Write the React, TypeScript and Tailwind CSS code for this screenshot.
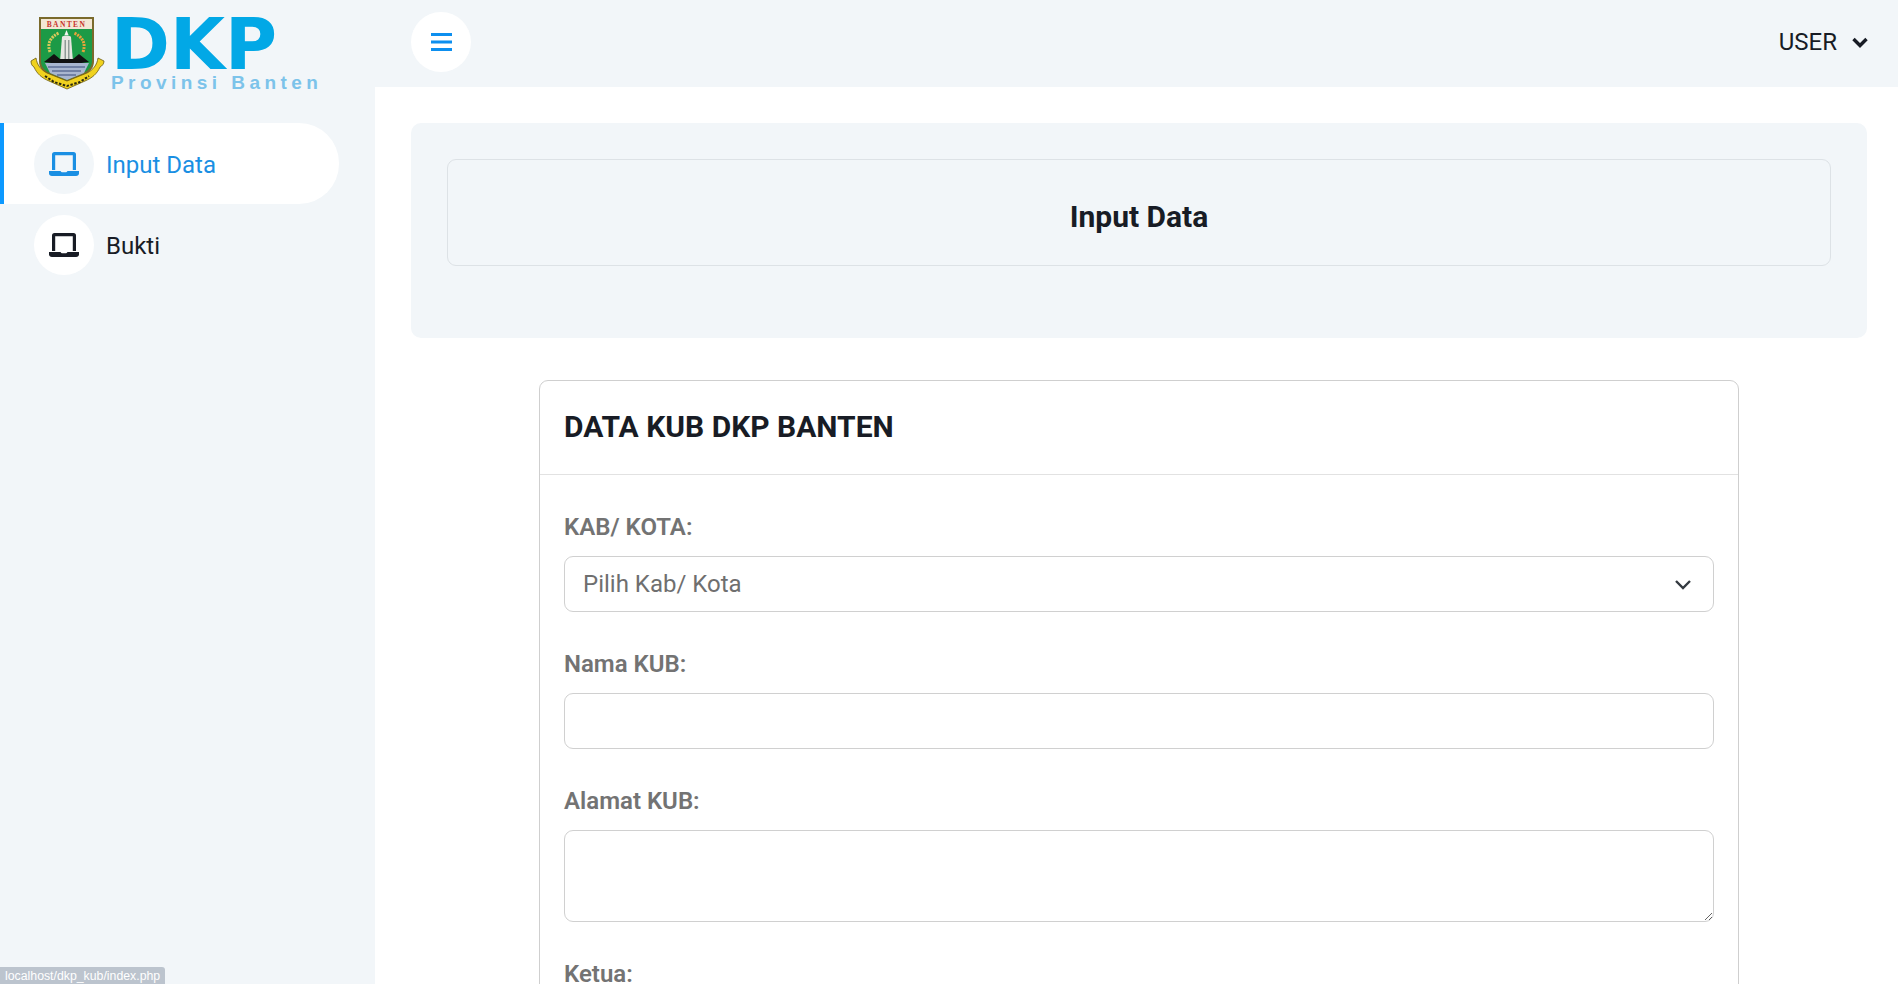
const LaptopIcon = ({ className }: { className: string }) => (
  <svg viewBox="0 0 30 24" className={className} fill="currentColor">
    <path d="M3 2.500A2.500 2.500 0 0 1 5.500 0h19A2.500 2.500 0 0 1 27 2.500V18h-3.200V3.200H6.200V18H3z" />
    <path d="M0 19h11.500c.4.9 1.200 1.300 2 1.300h3c.8 0 1.600-.4 2-1.300H30v1.800A3 3 0 0 1 27 24H3a3 3 0 0 1-3-3.200z" />
  </svg>
);

const MenuIcon = ({ className }: { className: string }) => (
  <svg viewBox="0 0 21 18" className={className} fill="currentColor">
    <rect width="21" height="3" />
    <rect y="7.500" width="21" height="3" />
    <rect y="15" width="21" height="3" />
  </svg>
);

const ChevronBold = ({ className }: { className: string }) => (
  <svg viewBox="0 0 16 11" className={className} fill="none" stroke="currentColor" strokeWidth="3.400">
    <path d="M1.500 2l6.500 6.500L14.500 2" />
  </svg>
);

// emblem of the province, simplified
const Emblem = () => (
  <svg viewBox="0 0 80 76" className="h-[76px] w-[80px] shrink-0">
    <path d="M11 1h55v44c0 7-4 11-10 14l-17 7-18-7c-6-3-10-7-10-14z" fill="#7a6a2c" />
    <path d="M13 3h51v42c0 6-4 10-9 12l-16 7-17-7c-5-2-9-6-9-12z" fill="#1c9a46" />
    <rect x="13" y="3" width="51" height="10" fill="#f3e7d5" />
    <text x="38.500" y="11" textAnchor="middle" fontSize="7.500" fontWeight="700" letterSpacing="1.400" fill="#c8352c" fontFamily="Liberation Serif, serif">BANTEN</text>
    <path d="M22 36c-3-8 0-15 9-19" fill="none" stroke="#d9c95a" strokeWidth="3" strokeDasharray="2 1" />
    <path d="M55 36c3-8 0-15-9-19" fill="none" stroke="#e8a33a" strokeWidth="3" strokeDasharray="2 1" />
    <path d="M38.500 14l2 5h-4z" fill="#f4f4f0" />
    <path d="M34 21c1-2 8-2 9 0l2 25H32z" fill="#e6e6e0" />
    <path d="M36.500 24h1.500v21h-1.500zM40 24h1.500v21H40z" fill="#8f9a96" />
    <path d="M16 46l10-8 6 5h13l6-5 10 8-23 3z" fill="#111" />
    <path d="M17 47h44l-5 10-17 7-17-7z" fill="#a9b6cf" />
    <path d="M20 51h37M24 55h29M29 59h19" stroke="#5e6f96" strokeWidth="1.400" />
    <path d="M3 45l5-3c1 7 5 12 11 15l20 8 20-8c6-3 10-8 11-15l6 3c0 3-2 5-4 6-3 7-8 11-15 14l-18 8-18-8c-7-3-12-7-15-14-2-1-3-3-3-6z" fill="#f0d21f" stroke="#6b5a10" strokeWidth="0.800" />
    <path d="M17 60l9 6 13 4 13-4 9-6" fill="none" stroke="#2a2a10" strokeWidth="2" strokeDasharray="2.500 1.500" />
  </svg>
);

const Field = ({ label, children }: { label: string; children: React.ReactNode }) => (
  <div className="mb-[35px]">
    <label className="mb-[12px] block text-[24px] leading-[34px] font-semibold text-[#737373]">{label}</label>
    {children}
  </div>
);

const inputClass = 'block w-full rounded-[9px] border border-[#d0d0d0] bg-white outline-none';

export default function App() {
  return (
    <div className="flex h-[984px] overflow-hidden bg-white font-['Roboto',sans-serif] text-[#181c25]">
      {/* Sidebar */}
      <aside className="w-[375px] shrink-0 bg-[#f2f6f9]">
        <div className="flex h-[123px] items-start pt-[16px] pl-[28px]">
          <Emblem />
          <div className="ml-[3px] font-bold">
            <div className="h-[57px] font-['DejaVu_Sans',sans-serif] text-[71px] leading-[57px] text-[#02a8e6]">DKP</div>
            <div className="font-['Liberation_Sans',sans-serif] text-[19px] leading-[20px] tracking-[4.450px] text-[#7cc3ea]">Provinsi Banten</div>
          </div>
        </div>
        <nav>
          <a className="flex h-[81px] w-[339px] items-center rounded-r-[40px] border-l-4 border-[#0d99ff] bg-white pl-[30px] text-[#1a8fe3]">
            <span className="flex h-[60px] w-[60px] items-center justify-center rounded-full bg-[#f2f6f9]">
              <LaptopIcon className="h-[24px] w-[30px]" />
            </span>
            <span className="ml-[12px] pt-[2px] text-[24px]">Input Data</span>
          </a>
          <a className="mt-[1px] flex h-[80px] w-[339px] items-center pl-[34px]">
            <span className="flex h-[60px] w-[60px] items-center justify-center rounded-full bg-white">
              <LaptopIcon className="h-[24px] w-[30px]" />
            </span>
            <span className="ml-[12px] pt-[2px] text-[24px]">Bukti</span>
          </a>
        </nav>
      </aside>

      <div className="min-w-0 flex-1">
        {/* Top bar */}
        <header className="flex h-[87px] items-center justify-between bg-[#f2f6f9] pr-[30px] pb-[3px] pl-[36px]">
          <button className="flex h-[60px] w-[60px] items-center justify-center rounded-full bg-white text-[#0d8fef]">
            <MenuIcon className="h-[18px] w-[21px]" />
          </button>
          <div className="flex items-center gap-[15px] text-[24px]">
            <span>USER</span>
            <ChevronBold className="h-[11px] w-[16px]" />
          </div>
        </header>

        <main className="px-[31px] pt-[36px] pl-[36px]">
          <div className="rounded-[10px] bg-[#f2f6f9] px-[36px] pt-[36px] pb-[72px]">
            <div className="flex h-[107px] items-center justify-center rounded-[9px] border border-[#dde2e6]">
              <h1 className="pt-[8px] text-[30px] font-bold">Input Data</h1>
            </div>
          </div>

          <section className="mx-auto mt-[42px] w-[1200px] rounded-t-[9px] border border-[#cfcfcf] bg-white">
            <div className="flex h-[94px] items-center border-b border-[#e2e2e2] px-[24px] pb-[2px]">
              <h2 className="text-[30px] font-bold">DATA KUB DKP BANTEN</h2>
            </div>
            <div className="px-[24px] pt-[35px]">
              <Field label="KAB/ KOTA:">
                <div className={`${inputClass} flex h-[56px] items-center justify-between pr-[22px] pl-[18px] text-[24px] text-[#6f6f6f]`}>
                  <span>Pilih Kab/ Kota</span>
                  <svg viewBox="0 0 16 11" className="h-[11px] w-[16px] text-[#343a40]" fill="none" stroke="currentColor" strokeWidth="2.400">
                    <path d="M1 2l7 7 7-7" />
                  </svg>
                </div>
              </Field>
              <Field label="Nama KUB:">
                <input className={`${inputClass} h-[56px]`} />
              </Field>
              <Field label="Alamat KUB:">
                <textarea className={`${inputClass} h-[92px]`} />
              </Field>
              <Field label="Ketua:">
                <input className={`${inputClass} h-[56px]`} />
              </Field>
            </div>
          </section>
        </main>
      </div>

      {/* browser status bubble */}
      <div className="fixed bottom-0 left-0 h-[17px] rounded-tr-[3px] bg-[#bcc4ce] px-[5px] font-['Liberation_Sans',sans-serif] text-[12.300px] leading-[18px] text-white">
        localhost/dkp_kub/index.php
      </div>
    </div>
  );
}
